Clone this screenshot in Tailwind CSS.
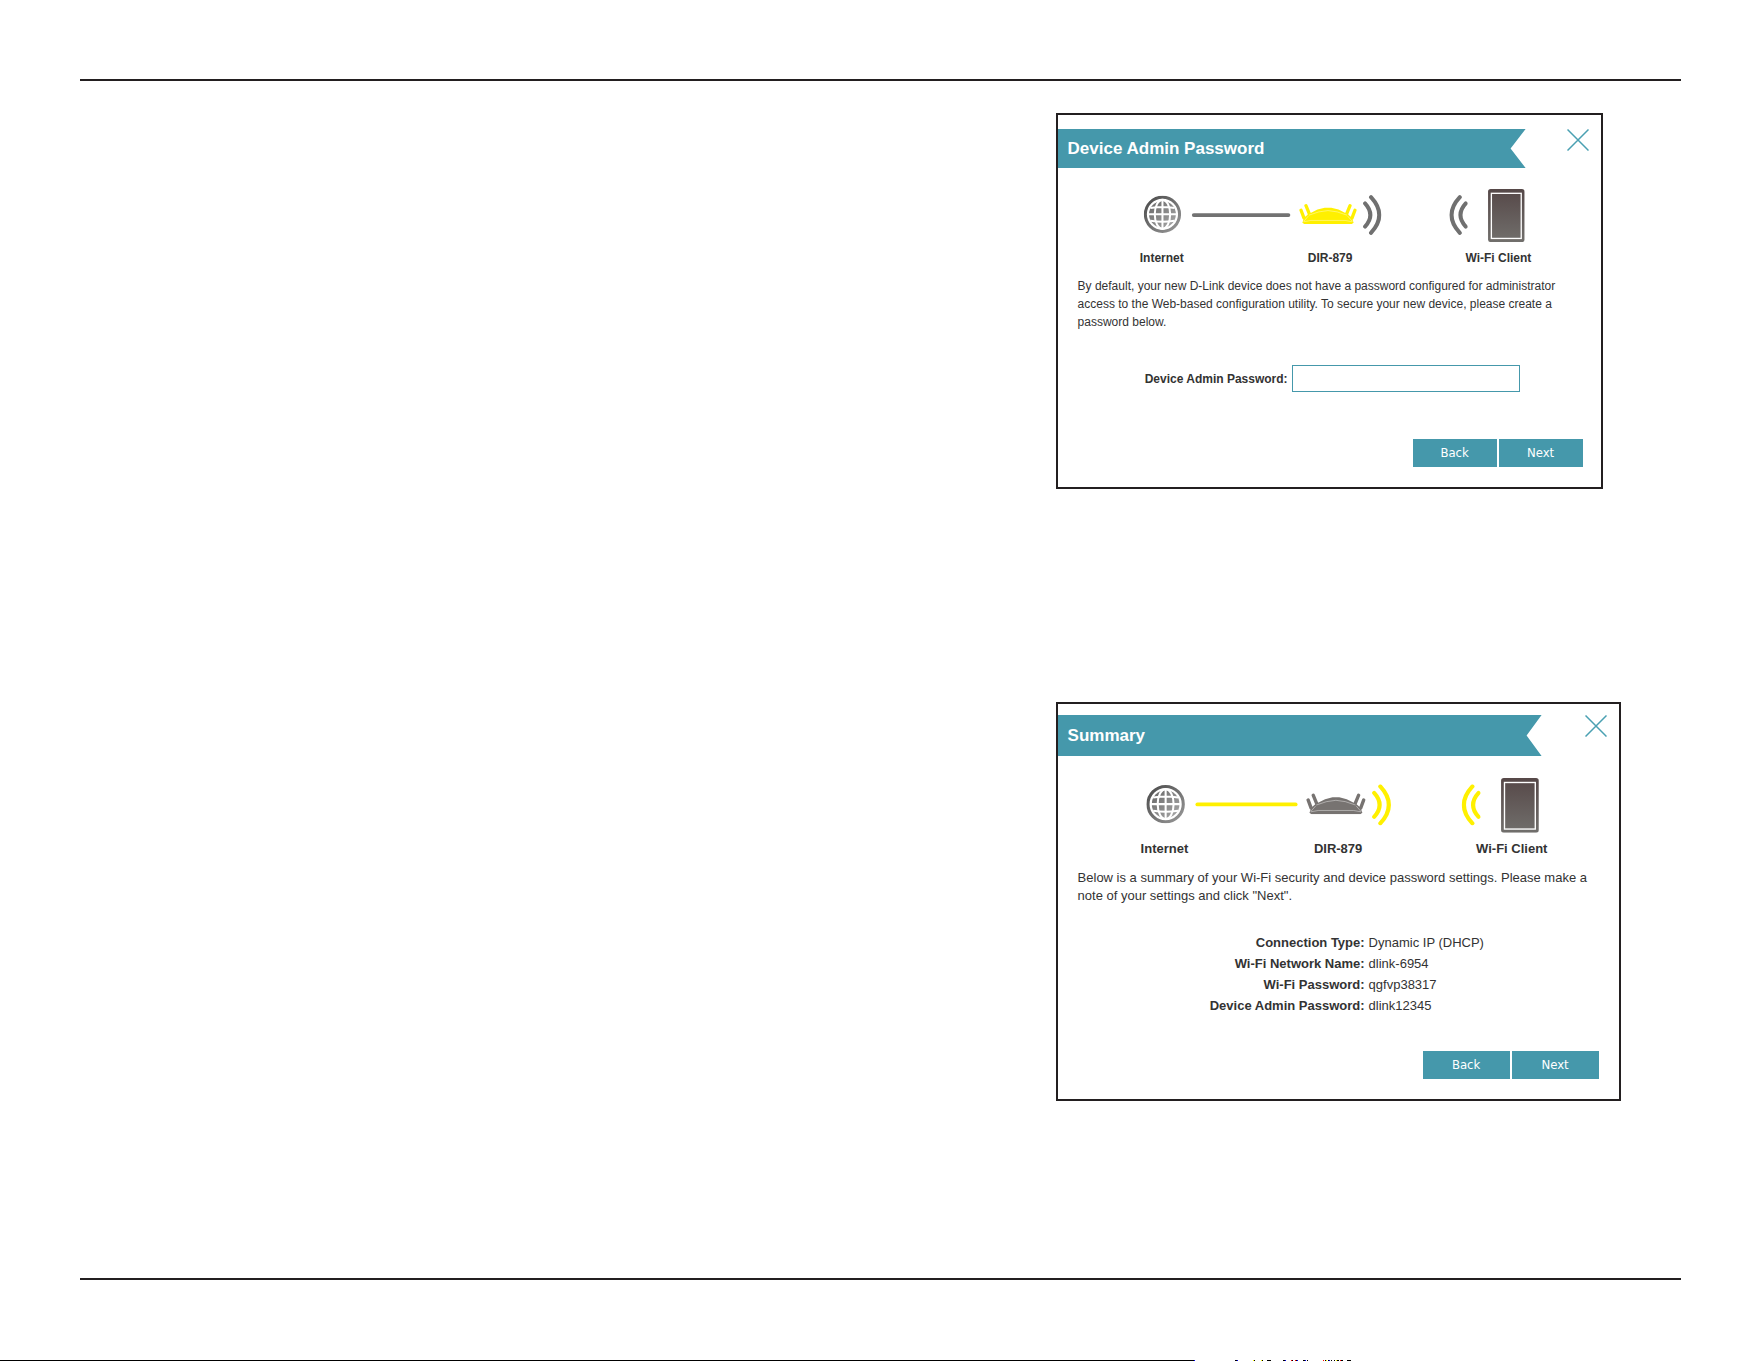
<!DOCTYPE html>
<html lang="en">
<head>
<meta charset="utf-8">
<meta name="viewport" content="width=device-width, initial-scale=1">
<title>DIR-879 Setup Wizard</title>
<script src="https://cdn.jsdelivr.net/npm/@tailwindcss/browser@4"></script>
</head>
<body class="bg-white font-['Liberation_Sans',Arial,sans-serif] text-[#333]">

<!-- Shared drawings -->
<svg class="absolute h-0 w-0" aria-hidden="true">
  <defs>
    <linearGradient id="tabletFill" x1="0" y1="0" x2="0" y2="1">
      <stop offset="0" stop-color="#564848"/>
      <stop offset="1" stop-color="#716f6c"/>
    </linearGradient>
    <linearGradient id="ringFill" x1="0" y1="0" x2="1" y2="1">
      <stop offset="0" stop-color="#4a4a4a"/>
      <stop offset="1" stop-color="#999"/>
    </linearGradient>
    <linearGradient id="globeFill" x1="0" y1="0" x2="1" y2="1">
      <stop offset="0" stop-color="#666"/>
      <stop offset="1" stop-color="#aaa"/>
    </linearGradient>
    <symbol id="globe" viewBox="0 0 112 112">
      <circle cx="56" cy="56" r="51" fill="#fff" stroke="url(#ringFill)" stroke-width="9"/>
      <circle cx="56" cy="56" r="40" fill="url(#globeFill)"/>
      <g fill="none" stroke="#fff" stroke-width="6">
        <path d="M56 12v88M12 56h88M20 37q36 -6 72 0M20 75q36 6 72 0"/>
        <ellipse cx="56" cy="56" rx="23" ry="43"/>
      </g>
    </symbol>
    <symbol id="router" viewBox="0 0 176 64">
      <path fill="currentColor" d="M10 60L16 44L28 34L56 20L78 14H98L120 20L148 34L160 44L166 60L160 64H16Z"/>
      <g fill="none" stroke="currentColor" stroke-width="10" stroke-linecap="round">
        <path d="M6 22L15 46M21 8L31 32M155 8L145 32M170 22L161 46"/>
      </g>
      <g fill="none" stroke="#fff" stroke-width="2" stroke-opacity=".6">
        <path d="M30 37L60 27L88 23L116 27L146 37M14 57L36 53H140L162 57M28 40L14 56M148 40L162 56"/>
      </g>
    </symbol>
    <symbol id="waves" viewBox="0 0 56 120">
      <g fill="none" stroke="currentColor" stroke-width="12" stroke-linecap="round">
        <path d="M24 6Q74 60 24 114M6 25Q38 60 6 95"/>
      </g>
    </symbol>
    <symbol id="tablet" viewBox="0 0 110 160">
      <rect width="110" height="160" rx="8" fill="url(#tabletFill)"/>
      <rect x="10" y="13" width="90" height="136" fill="none" stroke="#fff" stroke-width="4"/>
    </symbol>
  </defs>
</svg>

<div class="flex min-h-screen flex-col">
  <div class="mx-20 mt-[79px] border-t-2 border-[#231f20]"></div>

  <main class="mx-20 mt-8 flex flex-1 flex-col gap-[213px] pl-[55.4%]">

    <section class="w-[547px] border-2 border-[#231f20] pt-[14px] pb-5" aria-labelledby="t1">
      <header class="flex items-start gap-[41px] pr-3">
        <h2 id="t1" class="h-[39px] flex-1 bg-[#4598ab] pl-[10px] text-[17px] leading-10 font-bold text-white [clip-path:polygon(0_0,100%_0,calc(100%-15px)_50%,100%_100%,0_100%)]">Device Admin Password</h2>
        <button type="button" aria-label="Close" class="h-[22px] w-[22px]"><svg viewBox="0 0 22 22" class="h-full w-full" fill="none" stroke="#4aa0b2" stroke-width="1.5"><path d="M.5 .5L21.5 21.5M21.5 .5L.5 21.5"/></svg></button>
      </header>
      <div class="pr-[18px] pl-5">
        <svg viewBox="0 0 504 54" class="mt-5 block w-full" aria-hidden="true">
          <use href="#globe" x="65.500" y="7.500" width="37.500" height="37.500"/>
          <path d="M115.500 27H210" stroke="#727272" stroke-width="3.800" stroke-linecap="round"/>
          <use href="#router" x="220.500" y="15" width="58" height="21" color="#fff000"/>
          <use href="#waves" x="284.500" y="7" width="18.500" height="40" color="#707070"/>
          <use href="#waves" x="-389" y="7" width="18.500" height="40" color="#707070" transform="scale(-1 1)"/>
          <use href="#tablet" x="409" y="1" width="37" height="53"/>
        </svg>
        <div class="mt-[7px] grid grid-cols-3 text-center text-[12px] leading-[18px] font-bold">
          <span>Internet</span><span>DIR-879</span><span>Wi-Fi Client</span>
        </div>
        <p class="mt-[10px] text-[12px] leading-[18px]">By default, your new D-Link device does not have a password configured for administrator access to the Web-based configuration utility. To secure your new device, please create a password below.</p>
        <div class="mt-[34px] flex items-center justify-end gap-1 pr-[63px]">
          <label for="pw" class="text-[12px] leading-[18px] font-bold">Device Admin Password:</label>
          <input id="pw" type="text" class="h-[27px] w-[228px] border border-[#4598ab] px-2 text-[12px] outline-none">
        </div>
        <div class="mt-[47px] flex justify-end gap-[2px] font-['DejaVu_Sans_Condensed','Noto_Sans',sans-serif] text-[13px] text-white">
          <button type="button" class="h-7 w-[84px] bg-[#4598ab]">Back</button>
          <button type="button" class="h-7 w-[84px] bg-[#4598ab]">Next</button>
        </div>
      </div>
    </section>

    <section class="w-[565px] border-2 border-[#231f20] pt-[11px] pb-5" aria-labelledby="t2">
      <header class="flex items-start gap-[43px] pr-3">
        <h2 id="t2" class="h-[41px] flex-1 bg-[#4598ab] pl-[10px] text-[17px] leading-[42px] font-bold text-white [clip-path:polygon(0_0,100%_0,calc(100%-15px)_50%,100%_100%,0_100%)]">Summary</h2>
        <button type="button" aria-label="Close" class="h-[22px] w-[22px]"><svg viewBox="0 0 22 22" class="h-full w-full" fill="none" stroke="#4aa0b2" stroke-width="1.5"><path d="M.5 .5L21.5 21.5M21.5 .5L.5 21.5"/></svg></button>
      </header>
      <div class="px-5">
        <svg viewBox="-1 0 504 54" class="mt-[21px] block w-full" aria-hidden="true">
          <use href="#globe" x="65" y="7.500" width="37.500" height="37.500"/>
          <path d="M114.500 26.500H209.500" stroke="#fff000" stroke-width="3.800" stroke-linecap="round"/>
          <use href="#router" x="219.500" y="15" width="58" height="21" color="#777371"/>
          <use href="#waves" x="283.500" y="7" width="18.500" height="40" color="#fff000"/>
          <use href="#waves" x="-388.500" y="7" width="18.500" height="40" color="#fff000" transform="scale(-1 1)"/>
          <use href="#tablet" x="408" y="1" width="37" height="53"/>
        </svg>
        <div class="mt-[7px] grid grid-cols-3 text-center text-[13px] leading-[18px] font-bold">
          <span>Internet</span><span>DIR-879</span><span>Wi-Fi Client</span>
        </div>
        <p class="mt-[11px] text-[13px] leading-[18px]">Below is a summary of your Wi-Fi security and device password settings. Please make a note of your settings and click "Next".</p>
        <dl class="mt-[27px] grid grid-cols-[287px_1fr] gap-x-1 text-[13px] leading-[21px]">
          <dt class="text-right font-bold">Connection Type:</dt><dd>Dynamic IP (DHCP)</dd>
          <dt class="text-right font-bold">Wi-Fi Network Name:</dt><dd>dlink-6954</dd>
          <dt class="text-right font-bold">Wi-Fi Password:</dt><dd>qgfvp38317</dd>
          <dt class="text-right font-bold">Device Admin Password:</dt><dd>dlink12345</dd>
        </dl>
        <div class="mt-[35px] flex justify-end gap-[2px] font-['DejaVu_Sans_Condensed','Noto_Sans',sans-serif] text-[13px] text-white">
          <button type="button" class="h-7 w-[87px] bg-[#4598ab]">Back</button>
          <button type="button" class="h-7 w-[87px] bg-[#4598ab]">Next</button>
        </div>
      </div>
    </section>
  </main>

  <div class="mx-20 border-t-2 border-[#231f20]"></div>

  <footer class="mt-20 flex h-px">
    <div class="h-px w-[67.8%] bg-black"></div>
    <svg width="160" height="1" viewBox="0 0 160 1" shape-rendering="crispEdges" fill="#000" aria-hidden="true">
      <path d="M41 0h3v1h-3zM60 0h1v1h-1zM68 0h1v1h-1zM73 0h4v1h-4zM89 0h2v1h-2zM98 0h1v1h-1zM102 0h1v1h-1zM109 0h2v1h-2zM113 0h1v1h-1zM131 0h1v1h-1zM134 0h1v1h-1zM137 0h1v1h-1zM140 0h1v1h-1zM143 0h2v1h-2zM147 0h2v1h-2zM153 0h4v1h-4z"/>
      <path fill="#ff0" d="M59 0h1v1h-1zM67 0h1v1h-1zM132 0h1v1h-1zM142 0h1v1h-1z"/>
      <path fill="#f00" d="M97 0h1v1h-1zM101 0h1v1h-1zM129 0h1v1h-1zM146 0h1v1h-1z"/>
      <path fill="#00f" d="M0 0h1v1h-1zM43 0h1v1h-1zM91 0h1v1h-1zM103 0h1v1h-1zM111 0h1v1h-1zM135 0h1v1h-1z"/>
    </svg>
  </footer>
</div>
</body>
</html>
